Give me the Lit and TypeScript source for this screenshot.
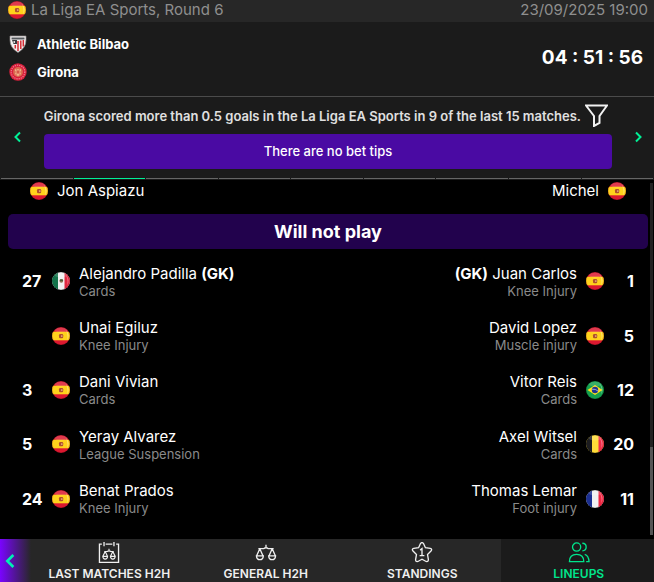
import { LitElement, html, svg, css, nothing } from "lit";
import { customElement, property } from "lit/decorators.js";

type Country = "es" | "mx" | "br" | "be" | "fr";

interface Player {
  number?: number;
  name: string;
  country: Country;
  reason: string;
  keeper?: boolean;
}

const HOME: Player[] = [
  { number: 27, name: "Alejandro Padilla", country: "mx", reason: "Cards", keeper: true },
  { name: "Unai Egiluz", country: "es", reason: "Knee Injury" },
  { number: 3, name: "Dani Vivian", country: "es", reason: "Cards" },
  { number: 5, name: "Yeray Alvarez", country: "es", reason: "League Suspension" },
  { number: 24, name: "Benat Prados", country: "es", reason: "Knee Injury" },
];

const AWAY: Player[] = [
  { number: 1, name: "Juan Carlos", country: "es", reason: "Knee Injury", keeper: true },
  { number: 5, name: "David Lopez", country: "es", reason: "Muscle injury" },
  { number: 12, name: "Vitor Reis", country: "br", reason: "Cards" },
  { number: 20, name: "Axel Witsel", country: "be", reason: "Cards" },
  { number: 11, name: "Thomas Lemar", country: "fr", reason: "Foot injury" },
];

const COUNTRY_NAMES: Record<Country, string> = {
  es: "Spain",
  mx: "Mexico",
  br: "Brazil",
  be: "Belgium",
  fr: "France",
};

const FLAGS = {
  es: svg`<rect width="18" height="18" fill="#dc1830"/><rect y="4.700" width="18" height="8.600" fill="#ffd21c"/>
    <rect x="7" y="7" width="4.200" height="4.200" rx="1.200" fill="#b0502c"/><rect x="9" y="8.200" width="1.500" height="1.800" fill="#dca070"/>`,
  mx: svg`<rect width="18" height="18" fill="#f1f1f1"/><rect width="6" height="18" fill="#13724a"/>
    <rect x="12.500" width="6" height="18" fill="#e02840"/><circle cx="9.300" cy="8.800" r="1.900" fill="#8a7350"/><path d="M8 7.500h3v1.500H8z" fill="#4c5a38"/>`,
  br: svg`<rect width="18" height="18" fill="#14a04e"/><path d="M1.500 9 9 4l7.500 5L9 14z" fill="#ffdf1c"/>
    <circle cx="9" cy="9" r="3.200" fill="#20358c"/><path d="M6 8.200q3.500-.4 6 1.800" stroke="#b8c4e8" stroke-width=".8" fill="none"/>`,
  be: svg`<rect width="18" height="18" fill="#ffdc38"/><rect width="6" height="18" fill="#1c1c20"/><rect x="12.500" width="6" height="18" fill="#f02c48"/>`,
  fr: svg`<rect width="18" height="18" fill="#f1f1f1"/><rect width="6" height="18" fill="#1b2f92"/><rect x="12.500" width="6" height="18" fill="#f02440"/>`,
};

@customElement("country-flag")
export class CountryFlag extends LitElement {
  @property() country: Country = "es";

  static styles = css`
    :host { display: block; flex: none; width: 18px; height: 18px; border-radius: 50%; overflow: hidden; }
    .flag { display: block; width: 100%; height: 100%; }
  `;

  render() {
    return html`<svg class="flag" viewBox="0 0 18 18" role="img" aria-label=${COUNTRY_NAMES[this.country]}>
      ${FLAGS[this.country]}
      <ellipse cx="9" cy="3" rx="6.500" ry="2.500" fill="#fff" opacity=".15"/>
      <circle cx="9" cy="9" r="8.800" fill="none" stroke="#000" stroke-width=".8" opacity=".2"/>
      <path d="M13.500 2.500a8 8 0 0 1 1.500 11q1.500-6-1.500-11" fill="#fff" opacity=".35"/>
    </svg>`;
  }
}

const athleticCrest = svg`<path d="M1 1h16v4q0 8-8 12.500Q1 13 1 5z" fill="#f4f2f2"/>
  <path d="M2.500 2.500h13v2h-13z" fill="#55585c"/><path d="M3 5h5v4H4.500z" fill="#3c3c40"/><path d="M4.500 6h1.500v2H4.500z" fill="#ddd"/>
  <path d="M9 6v10M11.800 5.500v8.500M14.300 5v6.500M6.300 10v3.500" stroke="#d42c34" stroke-width="1.500"/>
  <path d="M1 1h16v4q0 8-8 12.500Q1 13 1 5z" fill="none" stroke="#8c8888" stroke-width=".7"/>`;

const gironaCrest = svg`<circle cx="9" cy="9" r="8.700" fill="#d91f3c"/><circle cx="9" cy="9" r="6.800" fill="none" stroke="#ee8794" stroke-width="1.200" stroke-dasharray="1.200 1"/>
  <circle cx="9" cy="9" r="4.900" fill="#dc6a50"/><path d="M6 6.200h6V10q0 2-3 3-3-1-3-3z" fill="#f0b488"/>
  <path d="M7.500 6.500 10.500 11.500M10.500 6.500 7.500 11.500M6 9h6" stroke="#d0443c" stroke-width=".8"/>`;

const scales = svg`<path d="M11 1v3.500M3 5h5.500Q11 3 13.500 5H19M4.500 5 1.200 12.500M4.500 5l3.300 7.500M17.500 5l-3.300 7.500M17.500 5l3.300 7.500M1 12.500h7.200q-.3 4-3.600 4T1 12.500zM13.800 12.500H21q-.3 4-3.600 4t-3.600-4z"/>`;

const ICONS = {
  matches: svg`<path d="M3.500 2.200H1V21.300h20V2.200h-2.500M7.500 2.200h7M5.800 0v4.500M16.200 0v4.500"/>
    <path d="M11 7v2M6 10h3.200Q11 8.500 12.800 10H16M7 10l-2.400 5M7 10l2.400 5M15 10l-2.400 5M15 10l2.400 5M4.500 15h5q-.2 3-2.500 3t-2.500-3zM12.500 15h5q-.2 3-2.500 3t-2.500-3z" stroke-width="1.200"/>`,
  general: svg`<g transform="translate(0 2)">${scales}</g>`,
  standings: svg`<path d="M9.300 1.800Q11-.600 12.700 1.800L14.600 6l5 .7q2.500.7.800 2.700l-3.600 3.700.9 5.300q0 2.700-2.400 2L11 18l-4.300 2.400q-2.500.7-2.400-2l.9-5.300L1.600 9.400Q-.1 7.400 2.400 6.700l5-.7z"/>
    <path d="M9 8.500 11 7v7M8.500 14.200h5"/>`,
  lineups: svg`<circle cx="8.500" cy="5.300" r="4.300"/><path d="M1 20.500q0-7.500 7.500-7.500t7.500 7.500zM14.500 1.300q4 .2 4 4t-4 4M17 13q4 1 4.500 7.500h-3"/>`,
};

const TABS: { key: keyof typeof ICONS; label: string }[] = [
  { key: "matches", label: "LAST MATCHES H2H" },
  { key: "general", label: "GENERAL H2H" },
  { key: "standings", label: "STANDINGS" },
  { key: "lineups", label: "LINEUPS" },
];

@customElement("app-root")
export class AppRoot extends LitElement {
  static styles = css`
    :host {
      display: flex; flex-direction: column; min-height: 100vh; overflow: hidden;
      background: #000; color: #fff;
      font: 400 15px/20px Inter, "Liberation Sans", sans-serif;
    }
    * { box-sizing: border-box; }
    h1, h2, p, ul { margin: 0; padding: 0; list-style: none; }
    button { border: 0; padding: 0; background: none; color: inherit; font: inherit; cursor: pointer; }
    svg { display: block; }

    .competition {
      display: flex; align-items: center; gap: 5px; height: 22px; padding: 0 6px 2px 8px;
      background: #272727; color: #8f8f8f;
    }
    .competition h1 { flex: 1; font: inherit; }

    .match {
      display: flex; justify-content: space-between; align-items: center;
      padding: 8px 11px 10px 9px; background: #1b1b1b; border-bottom: 1px solid #4b4b4b;
    }
    .team { display: flex; align-items: center; gap: 10px; height: 28px; font-size: 13px; font-weight: 700; }
    .crest { width: 18px; height: 18px; }
    .countdown { font-size: 19px; font-weight: 700; }

    .tips { display: grid; grid-template-columns: 44px minmax(0, 1fr) 42px; padding: 6px 0 9px; background: #1b1b1b; }
    .arrow { display: grid; align-items: center; padding-top: 2px; color: #00f096; }
    .arrow.prev { padding-left: 13px; justify-content: start; }
    .arrow.next { padding-right: 11px; justify-content: end; }
    .chevron { width: 9px; height: 12px; fill: none; stroke: currentColor; stroke-width: 2; }
    .tip-head { display: flex; align-items: center; gap: 4px; height: 25px; }
    .ticker {
      flex: 1; display: flex; justify-content: flex-end; overflow: hidden; white-space: nowrap;
      font-size: 13px; font-weight: 600; color: #e0e0e0;
    }
    .filter { margin-right: 4px; }
    .filter svg { width: 23px; height: 23px; fill: none; stroke: #f2f2f2; stroke-width: 2; }
    .tip {
      height: 35px; margin-top: 6px; border-radius: 4px; background: #4a0aa3;
      font-size: 13px; font-weight: 500; line-height: 34px; text-align: center;
    }
    .steps { display: flex; gap: 1px; height: 2px; padding: 0 1px; background: #1b1b1b; }
    .step { flex: 1; height: 1px; background: #666; }
    .step.current { background: #00f096; }

    .lineups { flex: 1; display: flex; }
    .panel { flex: 1; display: flex; flex-direction: column; padding: 0 2px 13px 8px; }
    .coaches { display: flex; justify-content: space-between; padding: 1px 22px 0; height: 34px; }
    .coach { display: flex; align-items: center; gap: 9px; height: 20px; }
    .banner {
      height: 35px; border-radius: 5px; background: #22024d;
      font-size: 18px; font-weight: 700; line-height: 36px; text-align: center;
    }
    .squads { flex: 1; display: grid; grid-template-columns: 1fr 1fr; padding: 5px 14px 0; }
    .squad { display: grid; grid-auto-rows: minmax(40px, 1fr); }
    .player { display: flex; align-items: center; }
    .away .player { flex-direction: row-reverse; text-align: right; }
    .number { width: 30px; font-size: 16px; font-weight: 700; }
    .who { padding: 0 9px; }
    .name { line-height: 19px; }
    .reason { font-size: 13px; line-height: 16px; color: #8a8a8a; }
    .track { width: 3px; margin: 3px 1px 4px 0; background: #222; display: flex; align-items: flex-end; }
    .thumb { width: 100%; height: 25%; background: #555; }

    .tabs { display: flex; overflow: hidden; background: #272727; }
    .back {
      display: grid; align-items: center; width: 31px; padding-left: 4px; color: #00f0b4;
      background: linear-gradient(90deg, #7a04ff, #272727);
    }
    .back .chevron { width: 12px; height: 16px; }
    .tab-list { flex: 1; display: flex; margin-right: -3px; }
    .tab {
      flex: 1 1 0; display: flex; flex-direction: column; align-items: center; gap: 3px;
      height: 43px; padding-top: 3px; font-size: 12px; font-weight: 600; line-height: 16px; white-space: nowrap; color: #f0f0f0;
    }
    .tab svg { width: 22px; height: 22px; fill: none; stroke: currentColor; stroke-width: 1.4; }
    .tab.active { background: #1b1b1b; color: #00e58c; }
  `;

  private chevron(direction: "left" | "right") {
    return html`<svg class="chevron" viewBox="0 0 9 12" aria-hidden="true">
      <path d=${direction === "left" ? "M7 1.500 2.500 6 7 10.500" : "M2 1.500 6.500 6 2 10.500"} />
    </svg>`;
  }

  private player(p: Player, away: boolean) {
    const keeper = html`<b>(GK)</b>`;
    return html`<li class="player">
      <span class="number">${p.number ?? nothing}</span>
      <country-flag country=${p.country}></country-flag>
      <div class="who">
        <p class="name">${away && p.keeper ? html`${keeper} ` : nothing}${p.name}${!away && p.keeper ? html` ${keeper}` : nothing}</p>
        <p class="reason">${p.reason}</p>
      </div>
    </li>`;
  }

  render() {
    return html`
      <header class="competition">
        <country-flag country="es"></country-flag>
        <h1>La Liga EA Sports, Round 6</h1>
        <time datetime="2025-09-23T19:00">23/09/2025 19:00</time>
      </header>

      <section class="match">
        <div>
          <div class="team"><svg class="crest" viewBox="0 0 18 18" aria-hidden="true">${athleticCrest}</svg>Athletic Bilbao</div>
          <div class="team"><svg class="crest" viewBox="0 0 18 18" aria-hidden="true">${gironaCrest}</svg>Girona</div>
        </div>
        <time class="countdown">04 : 51 : 56</time>
      </section>

      <section class="tips">
        <button class="arrow prev" aria-label="Previous tip">${this.chevron("left")}</button>
        <div>
          <div class="tip-head">
            <div class="ticker"><span>Girona scored more than 0.5 goals in the La Liga EA Sports in 9 of the last 15 matches.</span></div>
            <button class="filter" aria-label="Filter">
              <svg viewBox="0 0 23 23"><path d="M1 1.500h21L14.500 12v7L9 22V12z" /></svg>
            </button>
          </div>
          <p class="tip">There are no bet tips</p>
        </div>
        <button class="arrow next" aria-label="Next tip">${this.chevron("right")}</button>
      </section>
      <div class="steps">
        ${Array.from({ length: 9 }, (_, i) => html`<span class="step ${i === 1 ? "current" : ""}"></span>`)}
      </div>

      <main class="lineups">
        <div class="panel">
          <div class="coaches">
            <div class="coach"><country-flag country="es"></country-flag>Jon Aspiazu</div>
            <div class="coach">Michel<country-flag country="es"></country-flag></div>
          </div>
          <h2 class="banner">Will not play</h2>
          <div class="squads">
            <ul class="squad home">${HOME.map((p) => this.player(p, false))}</ul>
            <ul class="squad away">${AWAY.map((p) => this.player(p, true))}</ul>
          </div>
        </div>
        <div class="track"><div class="thumb"></div></div>
      </main>

      <nav class="tabs">
        <button class="back" aria-label="Previous tabs">${this.chevron("left")}</button>
        <div class="tab-list">
          ${TABS.map((t) => html`<button class="tab ${t.key === "lineups" ? "active" : ""}">
            <svg viewBox="0 0 22 22" aria-hidden="true">${ICONS[t.key]}</svg>
            ${t.label}
          </button>`)}
        </div>
      </nav>
    `;
  }
}
